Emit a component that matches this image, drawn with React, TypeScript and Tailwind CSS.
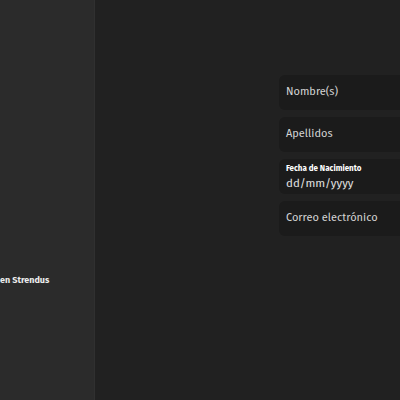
export default function App() {
  const font = { fontFamily: '"Fira Sans", "Noto Sans", "Open Sans", sans-serif' };
  return (
    <div className="flex h-[400px] w-[400px] overflow-hidden bg-[#212121]" style={font}>
      <aside className="flex h-full w-[95px] shrink-0 flex-col border-r border-[#303030] bg-[#2b2b2b]">
        <div className="h-[274px]" />
        <p className="whitespace-nowrap text-[9px] font-bold text-[#ececec]">en Strendus</p>
      </aside>
      <main className="flex flex-1 flex-col pl-[184px]">
        <div className="flex h-[75px] items-start justify-end pt-[20px]">
          <div className="h-[24px] w-[3px] bg-[#d8d8d8]" />
        </div>
        <div className="flex w-[200px] flex-col gap-[7px]">
          <div className="flex h-[35px] items-center rounded-l-[6px] bg-[#1b1b1b] px-[7px] text-[11px] text-[#d4d4d4]">Nombre(s)</div>
          <div className="flex h-[35px] items-center rounded-l-[6px] bg-[#1b1b1b] px-[7px] text-[11px] text-[#d4d4d4]">Apellidos</div>
          <div className="flex h-[35px] flex-col justify-center rounded-l-[6px] bg-[#1b1b1b] px-[7px] pt-[2px]">
            <span className="text-[8px] font-bold leading-[10px] text-white">Fecha de Nacimiento</span>
            <span className="mt-[2px] text-[11.5px] leading-[15px] text-[#e0e0e0]">dd/mm/yyyy</span>
          </div>
          <div className="flex h-[35px] items-center rounded-l-[6px] bg-[#1b1b1b] px-[7px] text-[11px] text-[#d4d4d4]">Correo electrónico</div>
        </div>
      </main>
    </div>
  );
}
